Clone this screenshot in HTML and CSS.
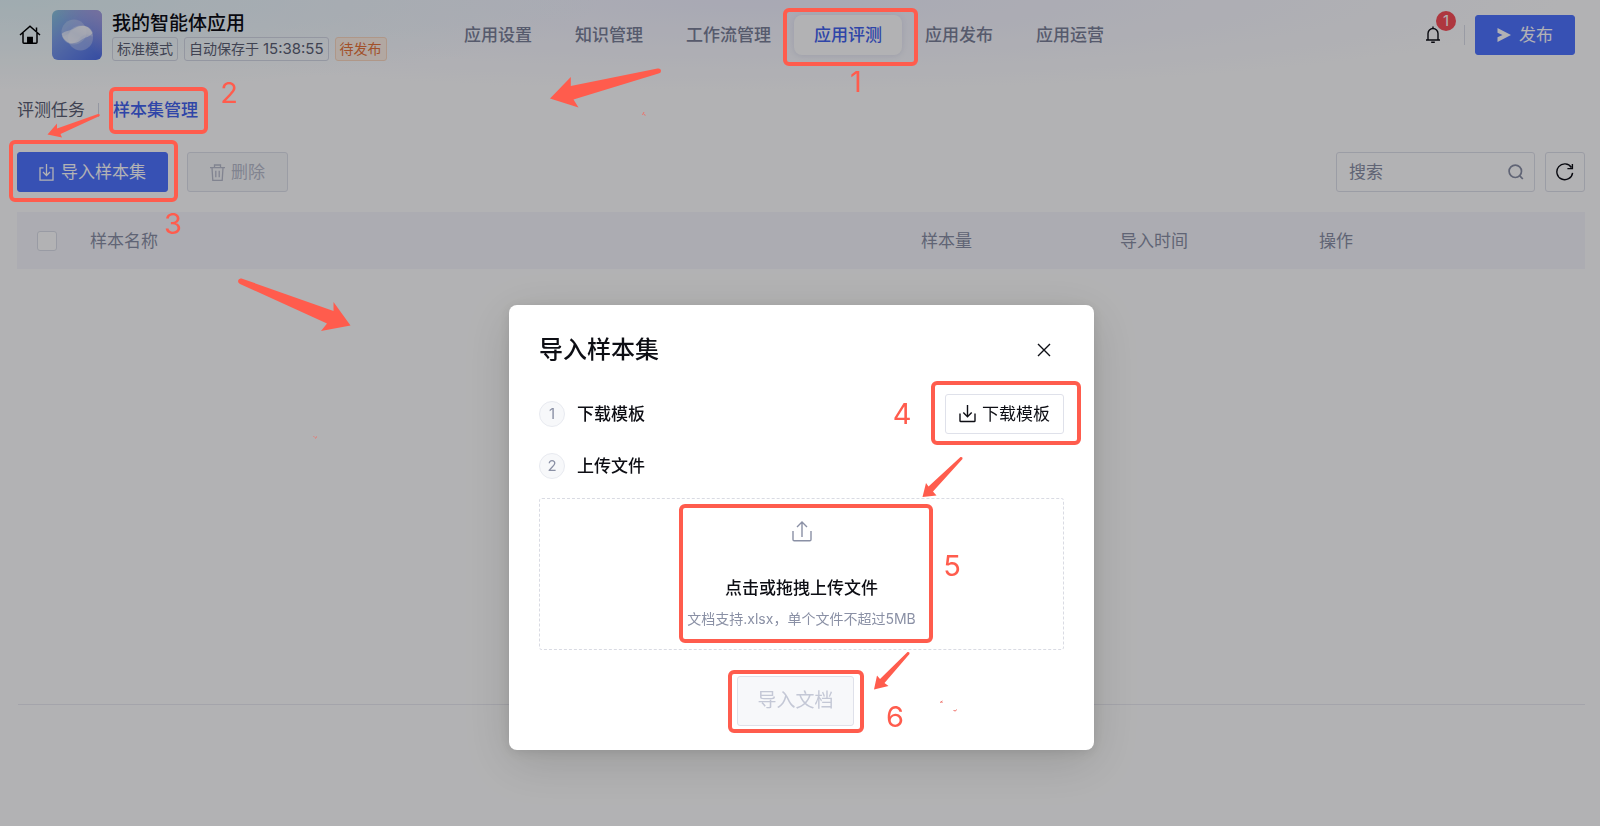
FILE: index.html
```html
<!DOCTYPE html>
<html lang="zh-CN">
<head>
<meta charset="utf-8">
<meta name="viewport" content="width=device-width, initial-scale=1">
<title>我的智能体应用</title>
<link rel="stylesheet" href="styles.css">
</head>
<body>
<div class="page">
  <header class="header">
    <div class="brand">
      <a class="home" href="#" aria-label="首页">
        <svg width="22" height="20" viewBox="0 0 22 20" fill="none" stroke="#000" stroke-width="1.5"><path d="M1 10 11 1.2 21 10M4 8v9.2q0 1 1 1h12q1 0 1-1V8"/><path d="M17.5 2.500v4"/><path d="M8.800 18v-5.400h4.400V18z" fill="#000"/></svg>
      </a>
      <svg class="logo" width="50" height="50" viewBox="0 0 50 50" aria-hidden="true">
        <defs>
          <linearGradient id="lg" x1="0" y1="0" x2="0.9" y2="1"><stop offset="0" stop-color="#8cc6dc"/><stop offset=".4" stop-color="#7c9cea"/><stop offset="1" stop-color="#5070e6"/></linearGradient>
          <linearGradient id="lv" x1="1" y1="0" x2=".5" y2=".5"><stop offset="0" stop-color="#b8a4dc" stop-opacity=".8"/><stop offset="1" stop-color="#b8a4dc" stop-opacity="0"/></linearGradient>
          <linearGradient id="la" x1="0" y1="1" x2="1" y2="0"><stop offset="0" stop-color="#fff" stop-opacity=".8"/><stop offset=".5" stop-color="#fff" stop-opacity=".55"/><stop offset="1" stop-color="#fff" stop-opacity=".85"/></linearGradient>
        </defs>
        <rect width="50" height="50" rx="6" fill="url(#lg)"/><rect width="50" height="50" rx="6" fill="url(#lv)"/>
        <circle cx="22" cy="22" r="12.500" fill="#fff" fill-opacity=".25"/>
        <circle cx="28.500" cy="28" r="12.500" fill="#fff" fill-opacity=".3"/>
        <path d="M9.500 23C10 30 16 24 22 19 29 14 41 15 41 25 41 30 36 20 29 27 23 34 17 36 12.500 30.500 10.500 28 9.500 26 9.500 23z" fill="#fff" fill-opacity=".25"/>
        <path d="M9.700 24C12 21 18 21 23 18 30 14 37 15 40.500 23 38 27 33 27 29 30 22 35.500 13 34.500 9.700 24z" fill="url(#la)"/>
      </svg>
      <div class="brand-info">
        <h1 class="app-name">我的智能体应用</h1>
        <div class="tags">
          <span class="tag">标准模式</span>
          <span class="tag">自动保存于 <time>15:38:55</time></span>
          <span class="tag tag-warn">待发布</span>
        </div>
      </div>
    </div>
    <nav class="nav">
      <a href="#">应用设置</a>
      <a href="#">知识管理</a>
      <a href="#">工作流管理</a>
      <a class="active" href="#">应用评测</a>
      <a href="#">应用发布</a>
      <a href="#">应用运营</a>
    </nav>
    <div class="actions">
      <button class="bell" type="button" aria-label="通知">
        <svg width="16" height="18" viewBox="0 0 16 18" fill="none" stroke="#0d0e14" stroke-width="1.4"><path d="M1 14h14M3 14V7.500a5 5 0 0 1 10 0V14M8 .5v2M6.200 16.300h3.600"/></svg>
        <span class="badge">1</span>
      </button>
      <span class="rule"></span>
      <button class="btn btn-primary publish" type="button">
        <svg width="14" height="14" viewBox="0 0 14 14" fill="#fff"><path d="M.5 0 14 7 .5 14V9.300L5.500 7 .5 4.700z"/></svg>发布
      </button>
    </div>
  </header>

  <main class="main">
    <div class="tabs">
      <a href="#">评测任务</a>
      <span class="tab-rule"></span>
      <a class="active" href="#">样本集管理</a>
    </div>
    <div class="toolbar">
      <button class="btn btn-primary import" type="button">
        <svg width="15" height="17" viewBox="0 0 15 17" fill="none" stroke="#fff" stroke-width="1.3"><path d="M4.500 3.800H1v12.400h13V3.800h-3.500M7.500 0v11.500M4 8l3.500 3.500L11 8"/></svg>导入样本集
      </button>
      <span class="rule"></span>
      <button class="btn delete" type="button" disabled>
        <svg width="15" height="17" viewBox="0 0 15 17" fill="none" stroke="currentColor" stroke-width="1.3"><path d="M0 3.700h15M4.500 3.500V1h6v2.500M2 3.700l.8 12.600h9.400L13 3.700M5.800 6.800v6.400M9.200 6.800v6.400"/></svg>删除
      </button>
      <div class="search">
        <input type="text" placeholder="搜索" aria-label="搜索">
        <svg width="16" height="16" viewBox="0 0 16 16" fill="none" stroke="#8a90a5" stroke-width="1.7"><circle cx="7.300" cy="7.300" r="6.200"/><path d="m11.800 11.800 3 3.200"/></svg>
      </div>
      <button class="btn refresh" type="button" aria-label="刷新">
        <svg width="18" height="18" viewBox="0 0 18 18" fill="none" stroke="#0d0e14" stroke-width="1.4"><path d="M16.600 9.800a7.900 7.900 0 1 1-1.200-5.300M16.400 1v4.600h-5"/></svg>
      </button>
    </div>
    <table class="table">
      <colgroup><col class="c-check"><col><col class="c-mid"><col class="c-mid"><col class="c-ops"></colgroup>
      <thead>
        <tr><th><input type="checkbox" aria-label="全选"></th><th>样本名称</th><th>样本量</th><th>导入时间</th><th>操作</th></tr>
      </thead>
    </table>
  </main>
  <footer class="footer"></footer>
</div>

<div class="mask">
  <section class="modal" role="dialog" aria-labelledby="modal-title">
    <div class="modal-head">
      <h2 id="modal-title">导入样本集</h2>
      <button class="close" type="button" aria-label="关闭">
        <svg width="14" height="14" viewBox="0 0 14 14" fill="none" stroke="#0d0e14" stroke-width="1.4"><path d="m1 1 12 12M13 1 1 13"/></svg>
      </button>
    </div>
    <div class="step">
      <span class="num">1</span><h3>下载模板</h3>
      <button class="btn download" type="button">
        <svg width="17" height="18" viewBox="0 0 17 18" fill="none" stroke="#0d0e14" stroke-width="1.4"><path d="M1 8.500v7.200q0 .8.8.8h13.400q.8 0 .8-.8V8.500M8.500 0v11.500M4.300 7.500l4.200 4.200 4.200-4.200"/></svg>下载模板
      </button>
    </div>
    <div class="step step-upload"><span class="num">2</span><h3>上传文件</h3></div>
    <button class="drop" type="button">
      <svg width="20" height="21" viewBox="0 0 20 21" fill="none" stroke="#8a90a5" stroke-width="1.4"><path d="M1 10v8.600q0 1.200 1.200 1.200h15.600q1.200 0 1.200-1.200V10M10 16V1.200M5 6l5-5 5 5"/></svg>
      <span class="drop-title">点击或拖拽上传文件</span>
      <span class="drop-hint">文档支持.xlsx，单个文件不超过5MB</span>
    </button>
    <div class="modal-foot">
      <button class="btn submit" type="button" disabled>导入文档</button>
    </div>
  </section>
</div>

<svg class="notes" width="1600" height="826" viewBox="0 0 1600 826">
  <g class="boxes">
    <rect x="785" y="10" width="131" height="54" rx="4"/>
    <rect x="111" y="89" width="95" height="43" rx="4"/>
    <rect x="11" y="142" width="165" height="58" rx="4"/>
    <rect x="933" y="383" width="146" height="60" rx="4"/>
    <rect x="681" y="506" width="250" height="135" rx="4"/>
    <rect x="730" y="672" width="132" height="59" rx="4"/>
  </g>
  <g class="arrows">
    <path d="M550 98.500 570.800 77V86L657.500 68.500Q661 68 661 71 661 73 658.500 73.500L573.500 99.500 578.500 107.500z"/>
    <path d="M350.500 325.500 333.500 302V311L241.500 278.500Q238.500 278 238 281 238 283 240 284L327 323.500 321 331z"/>
    <path d="M47.500 134.500 57 123.500V128.500L98 114Q100.500 113.800 99.500 116L60.500 134 62 137.500z"/>
    <path d="M922.500 497 926 483 928.500 486.500 960.500 457Q963 456.500 962.500 459L933 491.500 936.500 495.500z"/>
    <path d="M874 689.500 877 675.500 880 679 907.500 652Q910 651.500 909.500 654L884.500 683 888.500 686z"/>
  </g>
  <g class="specks">
    <path d="m642.500 115 1.500-3M644 114.500l1.500.8M313.500 436.500l1 .5M316.500 436.500l-1 2M940 702.500l2.500-1.500M942 703v-1M953.500 710.500l2 .5 1-1.500"/>
  </g>
  <g class="digits">
    <text x="856" y="92">1</text>
    <text x="229" y="103">2</text>
    <text x="173" y="234">3</text>
    <text x="902" y="424">4</text>
    <text x="952" y="576">5</text>
    <text x="895" y="727">6</text>
  </g>
</svg>
</body>
</html>
```
FILE: styles.css
```css
* { box-sizing: border-box; }

body {
  margin: 0;
  font-family: Inter, "Noto Sans CJK SC", sans-serif;
  font-size: 17px;
  line-height: 24px;
  color: #0d0e14;
}

h1, h2, h3 { margin: 0; font-weight: 500; }
a { color: inherit; text-decoration: none; }
button, input { font: inherit; color: inherit; }
svg { display: block; flex: none; }

.page {
  display: flex;
  flex-direction: column;
  min-height: 100vh;
  background:
    radial-gradient(ellipse 600px 90px at 0 0, rgba(222, 243, 248, .8), transparent),
    radial-gradient(ellipse 800px 90px at 760px 0, rgba(238, 239, 255, .8), transparent),
    #fff;
}

.header {
  display: flex;
  align-items: center;
  height: 70px;
  padding: 0 25px 0 19px;
}

.brand { display: flex; align-items: center; flex: 0 0 425px; }
.logo { margin: 0 10px 0 11px; }
.brand-info { padding-top: 2px; }
.app-name { font-size: 19px; line-height: 26px; }

.tags { display: flex; gap: 6px; font-size: 14px; }
.tag {
  padding: 0 4px;
  border: 1px solid #d5d8e4;
  border-radius: 3px;
  line-height: 22px;
  color: #5c6173;
  white-space: nowrap;
}
.tag time { font-size: 15px; }
.tag-warn { color: #e8743a; border-color: #fbd9c0; background: #fff1e6; }

.nav { display: flex; gap: 3px; }
.nav a {
  padding: 8px 20px;
  border-radius: 8px;
  color: #7c8299;
  font-weight: 500;
  white-space: nowrap;
}
.nav .active { background: #fff; color: #4464ee; box-shadow: 0 1px 6px rgba(60, 70, 130, .12); }

.actions { display: flex; align-items: center; margin-left: auto; }
.bell { position: relative; padding: 0; border: 0; background: none; }
.badge {
  position: absolute;
  left: 11px;
  bottom: 13px;
  width: 20px;
  border-radius: 10px;
  background: #fa5058;
  color: #fff;
  font-size: 15px;
  line-height: 20px;
}
.rule { width: 1px; height: 20px; background: #dcdfe8; }
.actions .rule { margin: 0 10px 0 23px; }

.btn {
  display: flex;
  align-items: center;
  justify-content: center;
  height: 40px;
  padding: 0;
  border: 1px solid #dfe1ea;
  border-radius: 3px;
  background: none;
  white-space: nowrap;
}
.btn-primary { border-color: #5074ff; background: #5074ff; color: #fff; }
.publish { width: 100px; gap: 8px; }

.main { flex: 1; padding: 28px 15px 0 17px; }

.tabs { display: flex; align-items: center; height: 24px; color: #5c6173; }
.tabs .active { color: #4464ee; font-weight: 500; }
.tab-rule { width: 1px; height: 14px; margin: 0 14px 0 13px; background: #d5d8e4; }

.toolbar { display: flex; align-items: center; margin-top: 30px; }
.import { width: 151px; gap: 7px; }
.toolbar .rule { margin: 0 9px 0 9px; }
.delete { width: 101px; gap: 6px; background: #f7f8fa; color: #b9bdcc; }
.search {
  display: flex;
  align-items: center;
  width: 199px;
  height: 40px;
  margin: 0 10px 0 auto;
  padding: 0 10px 0 12px;
  border: 1px solid #dfe1ea;
  border-radius: 3px;
}
.search input { flex: 1; min-width: 0; padding: 0; border: 0; outline: 0; background: none; }
.search input::placeholder { color: #8a90a5; opacity: 1; }
.refresh { width: 40px; }

.table { width: 100%; margin-top: 20px; border-collapse: collapse; table-layout: fixed; background: #f7f7fc; }
.table th { height: 57px; padding: 0 20px; text-align: left; font-weight: 400; color: #8a90a5; }
.table th:first-child { padding-right: 0; }
.c-check { width: 53px; }
.c-mid { width: 199px; }
.c-ops { width: 286px; }
.table input {
  display: block;
  appearance: none;
  width: 20px;
  height: 20px;
  margin: 0;
  border: 1px solid #dcdfe8;
  border-radius: 3px;
  background: #fff;
}

.footer { height: 122px; margin: 0 15px 0 18px; border-top: 1px solid #ebebf2; }

.mask {
  position: fixed;
  inset: 0;
  display: flex;
  align-items: flex-start;
  justify-content: center;
  padding: 305px 0 0 3px;
  background: rgba(0, 0, 5, .3);
}

.modal {
  width: 585px;
  padding: 28px 30px 24px;
  border-radius: 8px;
  background: #fff;
  box-shadow: 0 12px 48px rgba(0, 0, 0, .14), 0 2px 12px rgba(0, 0, 0, .1);
}
.modal-head { display: flex; align-items: center; justify-content: space-between; padding-right: 13px; }
.modal-head h2 { font-size: 24px; line-height: 34px; }
.close { padding: 0; border: 0; background: none; }

.step { display: flex; align-items: center; gap: 12px; height: 40px; margin-top: 27px; }
.step h3 { font-size: 17px; }
.step-upload { margin-top: 12px; }
.num {
  width: 26px;
  border: 1px solid #e8eaf0;
  border-radius: 13px;
  background: #f7f8fa;
  color: #8a90a5;
  font-size: 15px;
  line-height: 24px;
  text-align: center;
}
.download { width: 119px; gap: 6px; margin-left: auto; }

.drop {
  display: flex;
  flex-direction: column;
  align-items: center;
  width: 100%;
  margin-top: 12px;
  padding: 22px 0 18px;
  border: 1px dashed #d9dbe3;
  border-radius: 3px;
  background: none;
}
.drop-title { margin-top: 34px; font-weight: 500; }
.drop-hint { margin-top: 7px; font-size: 14px; color: #8a90a5; }

.modal-foot { display: flex; justify-content: center; padding: 26px 12px 0 0; }
.submit {
  width: 117px;
  height: 50px;
  background: #f7f8fa;
  color: #c4c8d6;
  font-size: 19px;
}

.notes { position: absolute; top: 0; left: 0; pointer-events: none; }
.boxes { fill: none; stroke: #ff5c4d; stroke-width: 4; }
.arrows { fill: #ff5c4d; }
.specks { fill: none; stroke: #ee6f68; stroke-width: 1; }
.digits { fill: #ff5c4d; font-size: 29px; font-weight: 400; text-anchor: middle; }
```
